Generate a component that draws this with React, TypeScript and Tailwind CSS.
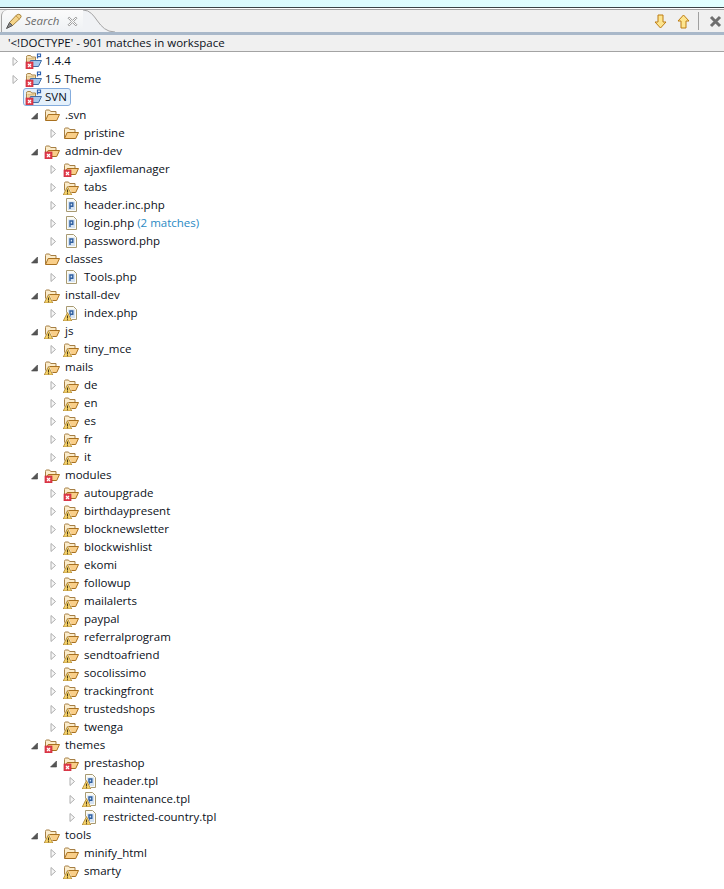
import React from "react";

type Badge = "none" | "error" | "warn";
type Kind = "folder" | "file" | "project";

interface Node {
  label: string;
  depth: number;
  kind?: Kind;
  badge?: Badge;
  open?: boolean;
  selected?: boolean;
  matches?: string;
}

const f = (label: string, depth: number, badge: Badge = "warn", open = false): Node => ({ label, depth, badge, open });

const ROWS: Node[] = [
  { label: "1.4.4", depth: 0, kind: "project", badge: "error" },
  { label: "1.5 Theme", depth: 0, kind: "project", badge: "error" },
  { label: "SVN", depth: 0, kind: "project", badge: "error", selected: true },
  f(".svn", 1, "none", true),
  f("pristine", 2, "none"),
  f("admin-dev", 1, "error", true),
  f("ajaxfilemanager", 2, "error"),
  f("tabs", 2),
  { label: "header.inc.php", depth: 2, kind: "file", badge: "none" },
  { label: "login.php", depth: 2, kind: "file", badge: "none", matches: "(2 matches)" },
  { label: "password.php", depth: 2, kind: "file", badge: "none" },
  f("classes", 1, "none", true),
  { label: "Tools.php", depth: 2, kind: "file", badge: "none" },
  f("install-dev", 1, "warn", true),
  { label: "index.php", depth: 2, kind: "file", badge: "warn" },
  f("js", 1, "warn", true),
  f("tiny_mce", 2),
  f("mails", 1, "warn", true),
  f("de", 2),
  f("en", 2),
  f("es", 2),
  f("fr", 2),
  f("it", 2),
  f("modules", 1, "error", true),
  f("autoupgrade", 2, "error"),
  f("birthdaypresent", 2),
  f("blocknewsletter", 2),
  f("blockwishlist", 2),
  f("ekomi", 2),
  f("followup", 2),
  f("mailalerts", 2),
  f("paypal", 2),
  f("referralprogram", 2),
  f("sendtoafriend", 2),
  f("socolissimo", 2),
  f("trackingfront", 2),
  f("trustedshops", 2),
  f("twenga", 2),
  f("themes", 1, "error", true),
  f("prestashop", 2, "error", true),
  { label: "header.tpl", depth: 3, kind: "file", badge: "warn" },
  { label: "maintenance.tpl", depth: 3, kind: "file", badge: "warn" },
  { label: "restricted-country.tpl", depth: 3, kind: "file", badge: "warn" },
  f("tools", 1, "warn", true),
  f("minify_html", 2, "none"),
  f("smarty", 2),
];

const DEPTH_PADDING = ["pl-[12px]", "pl-[31px]", "pl-[50px]", "pl-[69px]"];

const BadgeMark = ({ type }: { type: Badge }) => {
  if (type === "error") {
    return (
      <g>
        <rect x="1" y="9" width="7" height="7" fill="#e2404f" stroke="#c8283a" strokeWidth="0.7" />
        <path d="M3 11l3 3M6 11l-3 3" stroke="#fff" strokeWidth="1.2" />
      </g>
    );
  }
  if (type === "warn") {
    return (
      <g>
        <path d="M4.5 7.5 L8.8 16 H0.2 Z" fill="#f6d36a" stroke="#fff" strokeWidth="1.6" strokeLinejoin="round" />
        <path d="M4.5 7.5 L8.8 16 H0.2 Z" fill="#f6d36a" stroke="#a8802f" strokeWidth="0.8" strokeLinejoin="round" />
        <path d="M4.5 10.5v3M4.5 14.2v1" stroke="#4a3a18" strokeWidth="1.1" />
      </g>
    );
  }
  return null;
};

const TreeIcon = ({ kind, badge }: { kind: Kind; badge: Badge }) => {
  if (kind === "file") {
    return (
      <svg width="16" height="16" viewBox="0 0 16 16" className="shrink-0">
        <path d="M3.5 1.5h7l3 3v10h-10z" fill="#fbfbf6" stroke="#a89a72" />
        <rect x="5" y="4.5" width="7" height="8.5" fill="#d4e2f2" />
        <path d="M7 12V6h2.8v3.2H7" fill="none" stroke="#2f5f9f" strokeWidth="1.4" />
        <BadgeMark type={badge} />
      </svg>
    );
  }
  if (kind === "project") {
    return (
      <svg width="17" height="16" viewBox="0 0 17 16" className="shrink-0">
        <path d="M1.5 11V4.5q0-2 1-2h3l1.2 1.5h3.8v3" fill="#f6e3b8" stroke="#a9854a" />
        <path d="M2.5 5.5h7M2.5 7h7" stroke="#d8b878" strokeWidth="0.8" />
        <path d="M12.5 5.5V1h3v2.6h-3" fill="none" stroke="#2f62b0" strokeWidth="1.2" />
        <path d="M3 13.5L5.5 7.5H16.5L13.5 13.5Z" fill="#a8c8ec" stroke="#3f6fa8" />
        <BadgeMark type={badge} />
      </svg>
    );
  }
  return (
    <svg width="16" height="16" viewBox="0 0 16 16" className="shrink-0">
      <path d="M1.5 13V4.5q0-1.5 1-1.5h3l1.2 1.5h5.3v2.5" fill="#fbeccb" stroke="#a67f44" />
      <path d="M1.5 13.5L4.2 7.5H15.5L12.7 13.5Z" fill="#f9cf8a" stroke="#a8701f" strokeLinejoin="round" />
      <BadgeMark type={badge} />
    </svg>
  );
};

const Twisty = ({ open }: { open?: boolean }) => (
  <svg width="8" height="18" viewBox="0 0 8 18" className="shrink-0">
    {open ? (
      <path d="M6.5 7v6H.5Z" fill="#555" stroke="#444" strokeWidth="0.6" strokeLinejoin="round" />
    ) : (
      <path d="M1 5.5L5.5 9.5L1 13.5Z" fill="#f7f7f7" stroke="#aeaeae" strokeLinejoin="round" />
    )}
  </svg>
);

const TreeRow = ({ node }: { node: Node }) => {
  const { label, depth, kind = "folder", badge = "none", open, selected, matches } = node;
  return (
    <div className={`flex h-[18px] items-center ${DEPTH_PADDING[depth]}`}>
      {selected ? <div className="w-[8px] shrink-0" /> : <Twisty open={open} />}
      {selected ? (
        <div className="ml-[3px] flex h-[18px] items-center rounded-[3px] border border-[#84acdd] bg-[#e4f0fb] pl-[1px] pr-[3px]">
          <TreeIcon kind={kind} badge={badge} />
          <span className="ml-[3px]">{label}</span>
        </div>
      ) : (
        <div className="ml-[5px] flex items-center">
          <TreeIcon kind={kind} badge={badge} />
          <span className={kind === "project" ? "ml-[3px]" : "ml-[5px]"}>
            {label}
            {matches && <span className="text-[#2a8ac4]"> {matches}</span>}
          </span>
        </div>
      )}
    </div>
  );
};

const SearchGlyph = () => (
  <svg width="17" height="17" viewBox="0 0 17 17" className="shrink-0">
    <path d="M4.5 9.5L11.5 2Q14 0.5 15.5 2T15 5.5L7.5 12.5Z" fill="#f4d48a" stroke="#a8843e" />
    <path d="M11 3L14.6 6.2" stroke="#c99c48" />
    <path d="M1.5 15.5L4.5 9.5L7.5 12.5Z" fill="#8a8a8a" stroke="#555" strokeLinejoin="round" />
  </svg>
);

const ArrowGlyph = ({ up }: { up?: boolean }) => (
  <svg width="13" height="15" viewBox="0 0 13 15" className={up ? "shrink-0" : "shrink-0 rotate-180"}>
    <path d="M6.5 1L12 7H9V14H4V7H1Z" fill="#fde58f" stroke="#bd7c12" strokeLinejoin="round" />
  </svg>
);

const App = () => (
  <div
    className="h-[889px] w-[724px] overflow-hidden bg-white text-[11.5px] leading-[18px] text-[#0b1020]"
    style={{ fontFamily: '"Open Sans", "Noto Sans", sans-serif' }}
  >
    <div className="h-[7px] bg-gradient-to-r from-[#d6f7fb] to-[#e2ffff]" />
    <div className="h-[2px] border-t border-[#3a4144] bg-white" />

    {/* ── View tab bar ── */}
    <div className="flex h-[26px] items-stretch border-b-[3px] border-b-[#a9b8c9] bg-[#f0f0f0] border-t border-t-[#a3a3a3]">
      <div className="ml-[1px] flex w-[82px] items-center rounded-tl-[6px] border-l border-[#a3a3a3] bg-gradient-to-b from-[#fbfbfb] to-[#eef1f4] pl-[3px]">
        <SearchGlyph />
        <span className="ml-[3px] text-[11.5px] italic text-[#6b6b6b]">Search</span>
        <svg width="11" height="11" viewBox="0 0 10 10" className="ml-[8px] shrink-0">
          <path d="M2 1L5 4L8 1L9 2L6 5L9 8L8 9L5 6L2 9L1 8L4 5L1 2Z" fill="#fff" stroke="#8c8c8c" strokeWidth="0.8" />
        </svg>
      </div>
      <svg width="32" height="22" viewBox="0 0 32 22" className="shrink-0">
        <path d="M0 0C14 0 14 22 32 22H0Z" fill="#f0f2f5" />
        <path d="M0 0C14 0 14 22 32 22" fill="none" stroke="#a3a3a3" />
      </svg>
      <div className="ml-auto flex items-center">
        <ArrowGlyph />
        <div className="ml-[10px]">
          <ArrowGlyph up />
        </div>
        <div className="ml-[8px] h-[18px] w-px bg-[#a0a0a0]" />
        <svg width="13" height="13" viewBox="0 0 13 13" className="ml-[10px] mr-[2px] shrink-0">
          <path d="M2 2L11 11M11 2L2 11" stroke="#6e6e6e" strokeWidth="3" />
        </svg>
      </div>
    </div>

    {/* ── Result summary ── */}
    <div className="h-[17px] border-b border-[#a3a3a3] bg-[#f0f0f0] pl-[8px] leading-[16px]">
      '&lt;!DOCTYPE' - 901 matches in workspace
    </div>

    <div>
      {ROWS.map((node, i) => (
        <TreeRow key={i} node={node} />
      ))}
    </div>
  </div>
);

export default App;
